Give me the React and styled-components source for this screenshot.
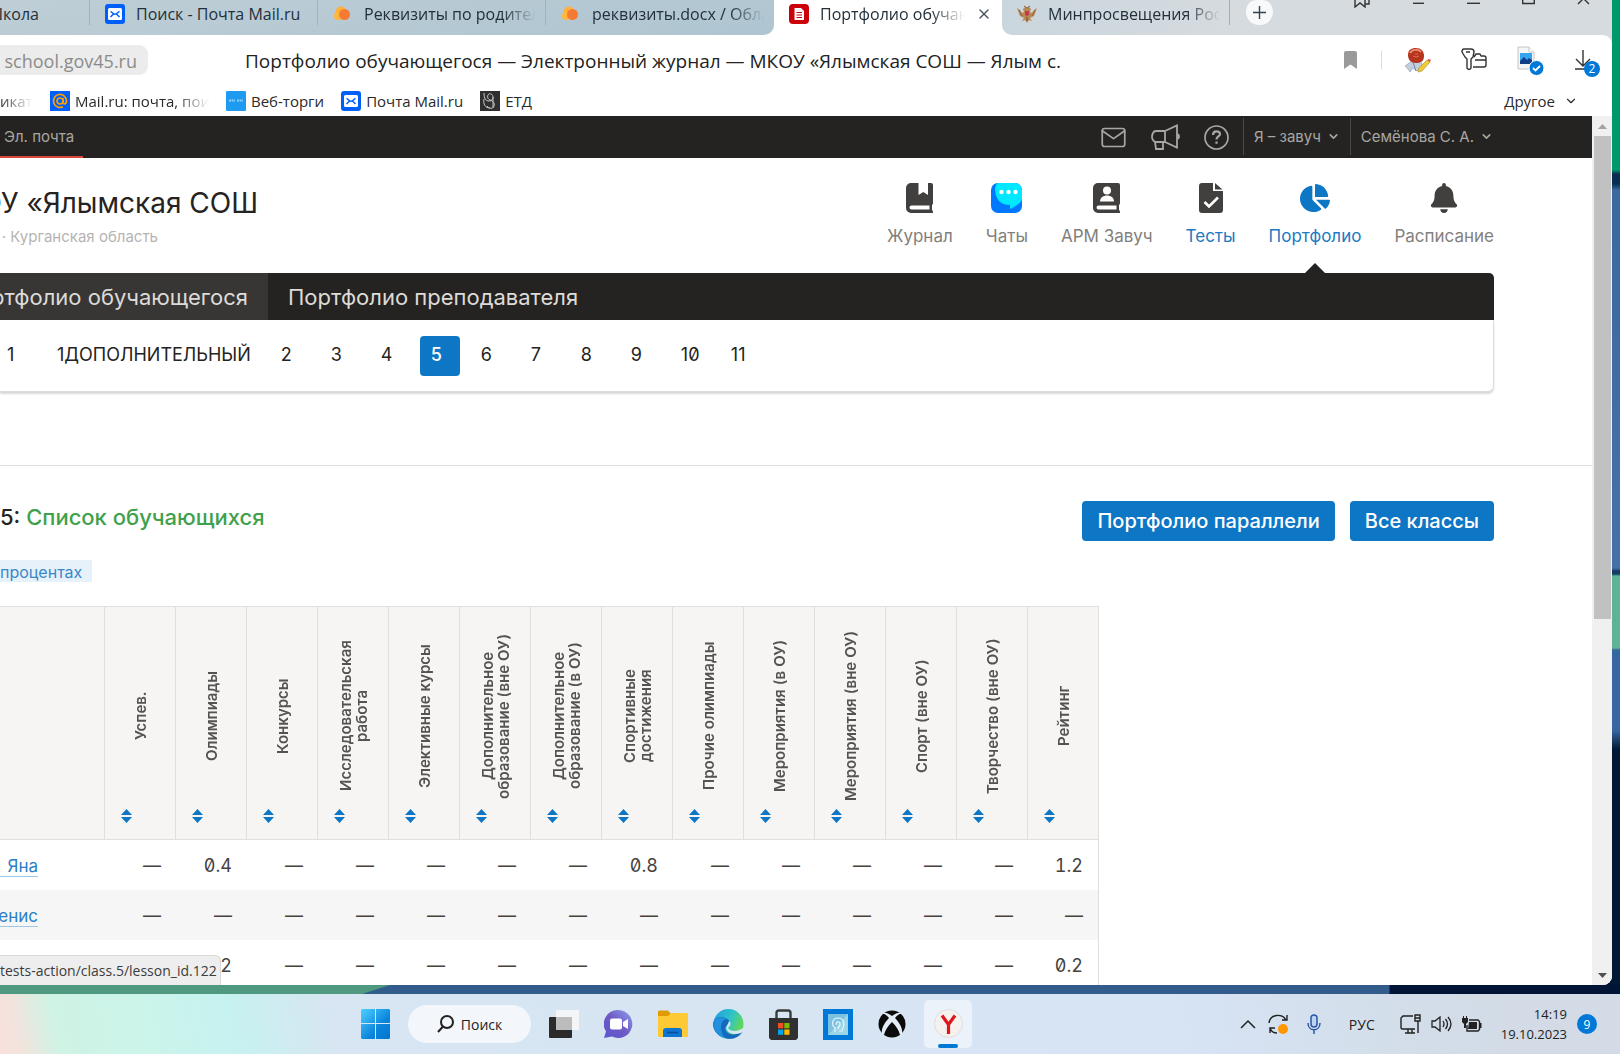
import styled, { createGlobalStyle, css } from "styled-components";
import { FaBell, FaChartPie } from "react-icons/fa";
import { FiChevronDown, FiMail, FiX } from "react-icons/fi";

const GlobalStyle = createGlobalStyle`
	* {
		box-sizing: border-box;
	}
	body {
		margin: 0;
		overflow: hidden;
		font-family: "Inter", "Liberation Sans", sans-serif;
		color: #252321;
	}
	button {
		border: 0;
		padding: 0;
		background: none;
		font: inherit;
		color: inherit;
		cursor: pointer;
	}
	a {
		color: inherit;
		text-decoration: none;
	}
	svg {
		display: block;
		flex: none;
	}
`;

/* ---------- desktop and browser chrome ---------- */

const Desktop = styled.div`
	display: flex;
	flex-direction: column;
	height: 100vh;
	background: linear-gradient(
		180deg,
		#00976a 0 170px,
		#0a2d55 174px 184px,
		#3a689f 190px,
		#4870a8 568px,
		#163a66 571px 574px,
		#5db393 576px 648px,
		#3767a3 650px 730px,
		#001836 750px
	);
`;
const BrowserWindow = styled.div`
	flex: 1;
	min-height: 0;
	margin-right: 8px;
	display: flex;
	flex-direction: column;
	overflow: hidden;
	border-radius: 0 0 9px 0;
	background: #d6dbdf;
	font-family: "Open Sans", "Noto Sans", sans-serif;
`;
const TabStrip = styled.div`
	display: flex;
	flex: none;
	height: 35px;
	background: #fff;
`;
const TabGroup = styled.div`
	display: flex;
	height: 35px;
	${(p) =>
		p.$after
			? css`
					flex: 1;
					border-radius: 0 0 0 10px;
					background: linear-gradient(100deg, #cad6dd, #d6dbdf 40%);
			  `
			: css`
					border-radius: 0 0 10px 0;
					background: linear-gradient(170deg, #bfced6, #aec5d1);
			  `}
`;
const Tab = styled.button`
	display: flex;
	align-items: center;
	gap: 11px;
	width: ${(p) => (p.$short ? 90 : 228)}px;
	height: 35px;
	padding: 0 10px 8px ${(p) => (p.$short ? 0 : 15)}px;
	background: ${(p) => (p.$active ? "#fff" : "none")};
	position: relative;
	&::after {
		content: "";
		display: ${(p) => (p.$line ? "block" : "none")};
		position: absolute;
		right: 0;
		top: 0;
		width: 1px;
		height: 25px;
		background: #9fb2bd;
	}
`;
const Fade = styled.span`
	overflow: hidden;
	white-space: nowrap;
	text-align: left;
	width: ${(p) => (p.$width ? p.$width + "px" : "auto")};
	flex: ${(p) => (p.$width ? "none" : 1)};
	mask-image: linear-gradient(to left, transparent, #000 34px);
`;
const TabText = styled(Fade)`
	font-size: 16px;
	line-height: 24px;
	color: #23303a;
	${(p) =>
		p.$whole &&
		css`
			flex: none;
			mask-image: none;
		`}
`;
/* Text that runs out of the left edge of its box */
const Cut = styled.span`
	display: flex;
	justify-content: flex-end;
	width: ${(p) => p.$width}px;
	overflow: hidden;
	white-space: nowrap;
`;
const NewTab = styled.button`
	display: grid;
	place-items: center;
	width: 27px;
	height: 25px;
	margin-left: 16px;
	border-radius: 11px 11px 13px 13px;
	background: #f7f9fa;
`;
const WindowButtons = styled.div`
	display: flex;
	align-items: flex-start;
	gap: 42px;
	margin-left: auto;
	padding-right: 22px;
`;
const Toolbar = styled.div`
	display: flex;
	flex: none;
	align-items: center;
	height: 50px;
	padding-right: 12px;
	border-radius: 0 9px 0 0;
	background: #fff;
`;
const Domain = styled.button`
	width: 148px;
	height: 30px;
	padding: 1px 11px 0 0;
	border-radius: 0 9px 9px 0;
	background: #ececec;
	color: #8b8b8b;
	font-size: 18px;
`;
const PageTitle = styled.div`
	flex: 1;
	margin-left: 97px;
	padding-top: 2px;
	white-space: nowrap;
	font-size: 19px;
	color: #222;
`;
const ToolIcons = styled.div`
	display: flex;
	align-items: center;
	gap: 28px;
`;
const Flag = styled.button`
	padding-right: 24px;
	border-right: 1px solid #dcdcdc;
	margin-right: -6px;
`;
const Bookmarks = styled.div`
	display: flex;
	flex: none;
	align-items: center;
	gap: 17px;
	height: 31px;
	padding-right: 34px;
	background: #fff;
	font-size: 15px;
	color: #2a2a2a;
`;
const Bookmark = styled.a`
	display: flex;
	align-items: center;
	gap: 5px;
	white-space: nowrap;
`;
const Other = styled.button`
	display: flex;
	align-items: center;
	gap: 9px;
	margin-left: auto;
`;

/* ---------- page ---------- */

const Viewport = styled.div`
	flex: 1;
	min-height: 0;
	display: flex;
	position: relative;
	background: #fff;
`;
const Page = styled.div`
	flex: 1;
	min-width: 0;
	overflow: hidden;
	font-family: "Inter", "Liberation Sans", sans-serif;
`;
const Scrollbar = styled.div`
	display: flex;
	flex-direction: column;
	align-items: center;
	width: 20px;
	background: #f0f0f0;
`;
const ScrollArrow = styled.button`
	display: grid;
	place-items: center;
	width: 20px;
	height: 20px;
`;
const ScrollThumb = styled.div`
	width: 17px;
	height: 483px;
	margin-bottom: auto;
	background: #c1c1c1;
`;
const StatusBubble = styled.div`
	position: absolute;
	left: 0;
	bottom: 0;
	padding: 0 3px 0 0;
	border: solid #d8d8d8;
	border-width: 1px 1px 0 0;
	border-radius: 0 6px 0 0;
	background: #eeeeee;
	font-size: 14px;
	line-height: 29px;
	color: #3c3c3c;
`;

const TopBar = styled.div`
	display: flex;
	height: 42px;
	padding-right: 99px;
	background: #252321;
	color: #a9a7a3;
	font-size: 15px;
`;
const MailLink = styled.a`
	padding: 0 9px 0 4px;
	line-height: 41px;
	border-bottom: 2px solid #d9473a;
`;
const TopIcons = styled.div`
	display: flex;
	align-items: center;
	gap: 24px;
	margin-left: auto;
	padding-right: 14px;
`;
const TopMenu = styled.button`
	display: flex;
	align-items: center;
	gap: 6px;
	margin: 2px 0 3px;
	padding: 0 ${(p) => (p.$last ? 0 : 10)}px 0 10px;
	border-left: 1px solid #4a4845;
`;

const Inner = styled.div`
	margin-right: 98px;
`;
const SiteHeader = styled.header`
	display: flex;
	justify-content: space-between;
	height: 115px;
`;
const School = styled.div`
	padding-top: 27px;
`;
const SchoolName = styled.h1`
	margin: 0 0 8px;
	font-size: 28px;
	line-height: 36px;
	font-weight: 400;
`;
const Region = styled.div`
	font-size: 15px;
	line-height: 16px;
	color: #b5b4b2;
`;
const Apps = styled.nav`
	display: flex;
	gap: 33px;
`;
const AppLink = styled.a`
	position: relative;
	display: flex;
	flex-direction: column;
	align-items: center;
	gap: 12px;
	padding-top: 25px;
	font-size: 17px;
	line-height: 22px;
	color: ${(p) => (p.$blue ? "#2079c3" : "#82807c")};
	&::after {
		content: "";
		display: ${(p) => (p.$current ? "block" : "none")};
		position: absolute;
		bottom: 0;
		border: 10px solid transparent;
		border-top: 0;
		border-bottom-color: #252321;
	}
`;
const Sections = styled.nav`
	display: flex;
	height: 47px;
	border-radius: 0 5px 0 0;
	overflow: hidden;
	background: #252321;
	color: #dddbd8;
	font-size: 22px;
	line-height: 48px;
`;
const Section = styled.a`
	padding: 0 20px;
	${(p) =>
		p.$current &&
		css`
			padding-left: 0;
			background: #383634;
		`}
`;
const Grades = styled.nav`
	display: flex;
	gap: 10px;
	height: 72px;
	margin-bottom: 73px;
	padding: 16px 0;
	border: solid #dcdcdc;
	border-width: 0 1px 1px 0;
	border-radius: 0 0 6px 0;
	box-shadow: 0 2px 2px #d9d9d9;
	font-size: 18px;
	line-height: 38px;
	font-feature-settings: "zero";
`;
const Grade = styled.a`
	min-width: 40px;
	height: 40px;
	padding: 0 9px 0 11px;
	border-radius: 4px;
	${(p) =>
		p.$first &&
		css`
			min-width: 36px;
			padding-left: 7px;
		`}
	${(p) =>
		p.$current &&
		css`
			background: #0d76c5;
			color: #fff;
			font-weight: 500;
		`}
`;
const Content = styled.main`
	padding-top: 35px;
	border-top: 1px solid #e0e0e0;
`;
const ListHead = styled(Inner)`
	display: flex;
	justify-content: space-between;
	align-items: flex-start;
	h2 {
		margin: 0;
		font-size: 22px;
		line-height: 32px;
		font-weight: 500;
	}
	em {
		font-style: normal;
		color: #3fa14c;
	}
`;
const Buttons = styled.div`
	display: flex;
	gap: 15px;
`;
const Button = styled.button`
	height: 40px;
	padding: 0 15px;
	border-radius: 4px;
	background: #0d76c5;
	color: #fff;
	font-size: 20px;
	font-weight: 500;
`;
const Percent = styled.button`
	display: block;
	height: 22px;
	margin: 19px 0 24px;
	padding: 1px 10px 0 0;
	background: #e6f1fa;
	color: #3a87c8;
	font-size: 16px;
`;

const Table = styled.table`
	table-layout: fixed;
	width: 1099px;
	border-collapse: separate;
	border-spacing: 0;
	border-top: 1px solid #e0dfdd;
	font-size: 18px;
	font-feature-settings: "tnum", "zero";
	col {
		width: 71px;
	}
	col:first-child {
		width: 105px;
	}
	th {
		padding: 0;
		border: solid #e0dfdd;
		border-width: 0 1px 1px 0;
		background: #f6f5f3;
	}
	td {
		height: 50px;
		padding: 1px 15px 0 0;
		text-align: right;
		color: #45423f;
	}
	td:first-child {
		padding: 0;
	}
	td:last-child {
		border-right: 1px solid #e0dfdd;
	}
	tbody tr:nth-child(even) td {
		background: #f6f6f6;
	}
`;
const HeadCell = styled.div`
	display: flex;
	flex-direction: column;
	align-items: center;
	gap: 7px;
	height: 232px;
	padding: 23px 14px 16px 16px;
`;
const HeadLabel = styled.span`
	height: 172px;
	writing-mode: vertical-rl;
	rotate: 180deg;
	text-align: center;
	font-size: 15px;
	line-height: 16px;
	font-weight: 600;
	color: #55524f;
`;
const Sort = styled.button`
	align-self: flex-start;
`;
const Student = styled.a`
	flex: none;
	min-width: 38px;
	padding-top: 3px;
	text-align: right;
	font-size: 17px;
	line-height: 20px;
	border-bottom: 1px solid #9ec7e8;
	color: #2b7fc6;
`;

/* ---------- taskbar ---------- */

const Taskbar = styled.footer`
	flex: none;
	display: flex;
	align-items: center;
	height: 60px;
	padding: 0 23px 0 361px;
	background: linear-gradient(
		78deg,
		#f9e0dd 0,
		#f3e3dd 20px,
		#cff3e4 60px,
		#cbf4ea 150px,
		#c6f2f0 230px,
		#d7e6f2 330px,
		#d7e4f4 1150px,
		#d2dbe6 1480px,
		#d2dbe6
	);
	font-family: "Open Sans", "Noto Sans", sans-serif;
	color: #222;
`;
/* The band of wallpaper between the window and the taskbar */
const Wallpaper = styled.div`
	flex: none;
	height: 9px;
	background: linear-gradient(90deg, #325c8b 1389px, #001535 1390px);
	&::before {
		content: "";
		display: block;
		width: 390px;
		height: 9px;
		background: #4f9981;
		clip-path: polygon(0 0, 100% 0, calc(100% - 28px) 100%, 0 100%);
	}
`;
const Pinned = styled.div`
	display: flex;
	align-items: center;
	gap: 25px;
	margin-left: 18px;
`;
const Search = styled.button`
	display: flex;
	align-items: center;
	justify-content: center;
	gap: 7px;
	width: 123px;
	height: 38px;
	margin-left: 18px;
	border-radius: 19px;
	background: #f3f7fc;
	font-size: 14px;
`;
const Running = styled.button`
	display: flex;
	flex-direction: column;
	align-items: center;
	justify-content: flex-end;
	gap: 6px;
	width: 48px;
	height: 48px;
	margin-left: -7px;
	border-radius: 5px;
	background: #ebf2fa;
	&::after {
		content: "";
		width: 20px;
		height: 4px;
		border-radius: 2px;
		background: #0078d4;
	}
`;
const Tray = styled.div`
	display: flex;
	align-items: center;
	margin-left: auto;
	font-size: 14px;
`;
const TrayGroup = styled.div`
	display: flex;
	align-items: center;
	gap: ${(p) => p.$gap}px;
	margin-right: ${(p) => p.$after}px;
`;
const Clock = styled.div`
	text-align: right;
	font-size: 13px;
	line-height: 20px;
`;
const Count = styled.span`
	display: grid;
	place-items: center;
	width: 20px;
	height: 20px;
	margin-left: 10px;
	border-radius: 50%;
	background: #0078d7;
	color: #fff;
	font-size: 12px;
`;

/* ---------- icons ---------- */

const MailRu = () => (
	<svg width="20" height="20" viewBox="0 0 20 20">
		<rect width="20" height="20" rx="3" fill="#005ff9" />
		<rect x="3" y="4" width="14" height="12" rx="1.5" fill="#fff" />
		<path d="M5.5 7.5c1.5.2 2.5 2.8 4.5 2.8s3-2.6 4.5-2.8M5.5 13l3-3M14.5 13l-3-3" fill="none" stroke="#005ff9" strokeWidth="1.5" />
	</svg>
);
const Cloud = () => (
	<svg width="20" height="20" viewBox="0 0 20 20">
		<circle cx="8" cy="8" r="5.5" fill="#ffb13c" />
		<circle cx="5" cy="12" r="4" fill="#ffb83d" />
		<circle cx="11.5" cy="10.500" r="5.5" fill="#f57a33" />
	</svg>
);
const Journal = () => (
	<svg width="20" height="20" viewBox="0 0 20 20">
		<rect width="20" height="20" rx="4" fill="#cc0008" />
		<path d="M5.5 4h6.5l3 3v9H5.5z" fill="#fff" />
		<path d="M7.5 8.5h5.5M7.5 11h5.5M7.5 13.5h5.5" stroke="#cc0008" strokeWidth="1.2" />
	</svg>
);
const Eagle = () => (
	<svg width="20" height="20" viewBox="0 0 20 20">
		<path d="M0 4l3 8 4 2-2 3 3-1 2 3 2-3 3 1-2-3 4-2 3-8-3 2-2 3-2-1 1-3-2-2-2 1-2-1-2 2 1 3-2 1-2-3z" fill="#b98a55" />
		<path d="M2 6l3 6M18 6l-3 6M7 2l3 2 3-2" stroke="#8a6238" fill="none" />
		<path d="M8 7h4v3.5l-2 2-2-2z" fill="#c43b4a" />
		<path d="M10 13v4" stroke="#6e4c2c" />
	</svg>
);
const AtMail = () => (
	<svg width="20" height="20" viewBox="0 0 20 20">
		<rect width="20" height="20" fill="#005ff9" />
		<circle cx="10" cy="10" r="3" fill="none" stroke="#ff9e00" strokeWidth="1.7" />
		<path d="M13 7v4.5c0 2 3.5 2 3.5-1.5A6.5 6.5 0 1 0 13 15.7" fill="none" stroke="#ff9e00" strokeWidth="1.7" />
	</svg>
);
const Torgi = () => (
	<svg width="20" height="20" viewBox="0 0 20 20">
		<rect width="20" height="20" rx="1" fill="#1e9bf0" />
		<path d="M3 9.5h6M11 9.5h6" stroke="#8fd0fb" strokeWidth="2" strokeDasharray="2 .6" />
	</svg>
);
const Etd = () => (
	<svg width="20" height="20" viewBox="0 0 20 20">
		<rect width="20" height="20" fill="#2f2f2f" />
		<path d="M4 2c0 6 2 8 5 8s4-2 4-4-2-4-4-3-2 5 1 6 5 3 4 6-5 3-7 0M13 6v11M4 8c-1 5 1 9 6 9" fill="none" stroke="#c9c9c9" />
	</svg>
);
const FlagIcon = () => (
	<svg width="13" height="18" viewBox="0 0 13 18">
		<path d="M2 0h9a2 2 0 0 1 2 2v16l-6.5-4.5L0 18V2a2 2 0 0 1 2-2z" fill="#9a9a9a" />
	</svg>
);
const Hero = () => (
	<svg width="28" height="28" viewBox="0 0 28 28">
		<path d="M1 20l7-5 10 2-1 5-4 3-4-3-3 4-2-3z" fill="#c3cedd" stroke="#8997aa" strokeWidth=".6" />
		<path d="M9 16l3 9" stroke="#7486a0" />
		<path d="M4 9c0-5 3-7 8-7s8 3 8 8-3 7-8 7-8-3-8-8z" fill="#b5351f" />
		<path d="M6 7c2-4 9-4 11-1" stroke="#ea8d73" strokeWidth="2" fill="none" />
		<path d="M9 10l3 1 3-1M11 8h3" stroke="#e06b50" fill="none" />
		<path d="M14 26l1-4 8-8 3 2-8 9z" fill="#f0cb34" stroke="#a38a1f" strokeWidth=".6" />
		<path d="M23 14l2-1 2 1-1 2z" fill="#e2574c" />
	</svg>
);
const Keys = () => (
	<svg width="28" height="28" viewBox="0 0 28 28" fill="none" stroke="#333" strokeWidth="1.4" strokeLinejoin="round">
		<path d="M4 3h7q3 0 3 3l-1 5-2 2v9q-2 3-4 0v-9l-2-2-3-5q0-3 2-3z" />
		<path d="M6 6h4M14 11l2-3h4l1 2h3q2 0 2 2v7q0 2-2 2h-11M15 14h11" />
	</svg>
);
const DocBadge = () => (
	<svg width="28" height="32" viewBox="0 0 28 32">
		<path d="M2 3h11l5 5v17H2z" fill="#f5f5f5" stroke="#c6c6c6" />
		<path d="M13 3v5h5" fill="#fff" stroke="#c6c6c6" />
		<rect x="4" y="9" width="12" height="11" fill="#34a5ee" />
		<path d="M4 20v-3l4-4 3 3 2-2 3 2v4z" fill="#123f86" />
		<circle cx="20.5" cy="24" r="7.500" fill="#0078d7" stroke="#fff" />
		<path d="M17 24l2.5 2.5 4.5-4.5" fill="none" stroke="#fff" strokeWidth="1.8" />
	</svg>
);
const Downloads = styled.button`
	position: relative;
	span {
		position: absolute;
		right: 0;
		bottom: -3px;
		width: 16px;
		height: 16px;
		border-radius: 50%;
		background: #0078d7;
		color: #fff;
		font-size: 12px;
		line-height: 16px;
	}
`;
const DownloadIcon = () => (
	<svg width="28" height="28" viewBox="0 0 28 28" fill="none" stroke="#333" strokeWidth="1.4">
		<path d="M11 4v16M4 13l7 7 7-7M3 23h12" />
	</svg>
);
const Megaphone = () => (
	<svg width="29" height="26" viewBox="0 0 29 26" fill="none" stroke="#a9a7a3" strokeWidth="1.8">
		<path d="M14 7H5q-2 0-3 2-2 4 0 7 1 2 3 2h9zM14 7l12-5.500v22L14 18M4 18l1 7h7v-7M27 10q2 2.500 0 5" />
	</svg>
);
const Help = () => (
	<svg width="25" height="25" viewBox="0 0 25 25" fill="none" stroke="#a9a7a3">
		<circle cx="12.5" cy="12.5" r="11.5" strokeWidth="1.7" />
		<path d="M9 10c0-5 7-4.5 7-1 0 2.5-3.5 2.5-3.5 5.5M12.5 16.5v2.2" strokeWidth="2.2" />
	</svg>
);
const BookBase = ({ children }) => (
	<svg width="27" height="30" viewBox="0 0 27 30">
		<path
			d="M5 0h20a2 2 0 0 1 2 2v18q0 1.5-1 2v5q1 .5 1 2v1H5a5 5 0 0 1-5-5V5a5 5 0 0 1 5-5zM5.5 22.5a2 2 0 0 0 0 4H23.5v-4z"
			fill="#42403e"
			fillRule="evenodd"
		/>
		{children}
	</svg>
);
const BookIcon = () => (
	<BookBase>
		<path d="M12.5 0h9.500v12l-4.700-3-4.800 3z" fill="#fff" />
	</BookBase>
);
const PersonBookIcon = () => (
	<BookBase>
		<circle cx="14" cy="7.5" r="4" fill="#fff" />
		<path d="M7 18.5c0-8 14-8 14 0z" fill="#fff" />
	</BookBase>
);
const ChatIcon = () => (
	<svg width="31" height="30" viewBox="0 0 31 30">
		<rect width="31" height="30" rx="7" fill="#0077ff" />
		<path d="M7 0h17a7 7 0 0 1 7 7v10q-3 5-12 9v-4C9 22 5 16 4 7c0-4 1-6 3-7z" fill="#00e8ff" />
		<g fill="#fff">
			<circle cx="10.5" cy="9" r="2.2" />
			<circle cx="17.5" cy="9" r="2.2" />
			<circle cx="24.5" cy="9" r="2.2" />
		</g>
	</svg>
);
const TestIcon = () => (
	<svg width="24" height="30" viewBox="0 0 24 30">
		<path d="M3 0h11v8h10v19a3 3 0 0 1-3 3H3a3 3 0 0 1-3-3V3a3 3 0 0 1 3-3z" fill="#42403e" />
		<path d="M16 0l7.5 6.5H16z" fill="#42403e" />
		<path d="M5.5 19l4.5 4.5 9-9" fill="none" stroke="#fff" strokeWidth="2.6" />
	</svg>
);
const SortIcon = () => (
	<svg width="11" height="14" viewBox="0 0 11 14">
		<path d="M5.5 0L11 6H0zM5.5 14L11 8H0z" fill="#0d76c5" />
	</svg>
);
const WindowsIcon = () => (
	<svg width="29" height="30" viewBox="0 0 29 30">
		<defs>
			<linearGradient id="win" x1="0" y1="0" x2="1" y2="1">
				<stop offset="0" stopColor="#4fd0ff" />
				<stop offset=".6" stopColor="#0c86dd" />
				<stop offset="1" stopColor="#0074d0" />
			</linearGradient>
		</defs>
		<path d="M1 0h13v14H0V1zM15 0h13l1 1v13H15zM0 15h14v15H1l-1-1zM15 15h14v14l-1 1H15z" fill="url(#win)" />
	</svg>
);
const SearchIcon = () => (
	<svg width="17" height="18" viewBox="0 0 17 18" fill="none" stroke="#222" strokeWidth="2">
		<circle cx="10" cy="7" r="6" />
		<path d="M6 11.5L1 17" />
	</svg>
);
const TaskView = () => (
	<svg width="30" height="30" viewBox="0 0 30 30">
		<rect y="8" width="23" height="21" rx="1" fill="#2b2b2b" />
		<rect x="7" y="1" width="23" height="20" rx="1" fill="#f4f5f6" />
		<rect x="7" y="8" width="16" height="13" fill="#bcbcbc" />
	</svg>
);
const TeamsChat = () => (
	<svg width="29" height="30" viewBox="0 0 29 30">
		<defs>
			<linearGradient id="chat" x1="1" y1="0" x2="0" y2="1">
				<stop offset="0" stopColor="#8fa0f0" />
				<stop offset=".5" stopColor="#6f5bc4" />
				<stop offset="1" stopColor="#5a55d0" />
			</linearGradient>
		</defs>
		<path d="M14.5 1A14 14 0 1 1 8 27.5L0 29l2-6.5A14 14 0 0 1 14.5 1z" fill="url(#chat)" />
		<rect x="6" y="9.5" width="12" height="11" rx="2" fill="#fff" />
		<path d="M19 13l5-3v10l-5-3z" fill="#fff" />
	</svg>
);
const Explorer = () => (
	<svg width="30" height="28" viewBox="0 0 30 28">
		<path d="M0 2a1.5 1.5 0 0 1 1.5-1.5H10L13 4v5H0z" fill="#e09b00" />
		<path d="M0 6h10l3-3h16l1 1v22l-1 1H1l-1-1z" fill="#fdc935" />
		<path d="M5 27v-6a3 3 0 0 1 3-3h13a3 3 0 0 1 3 3v6z" fill="#0d74cf" />
		<path d="M9 22.5h11" stroke="#064f98" strokeWidth="1.5" />
	</svg>
);
const Edge = () => (
	<svg width="31" height="30" viewBox="0 0 31 30">
		<defs>
			<linearGradient id="edgeTop" x1="0" y1="0" x2="1" y2=".4">
				<stop offset="0" stopColor="#1d9be0" />
				<stop offset=".6" stopColor="#2fc3c9" />
				<stop offset="1" stopColor="#62d85a" />
			</linearGradient>
		</defs>
		<circle cx="15.5" cy="15" r="15" fill="url(#edgeTop)" />
		<path d="M0 15C1 8 7 7 12 9c6 2 5 5 4 8-2-2-5 1-3 5 3 5 11 4 17 0-5 9-15 9-20 6C4 26 0 21 0 15z" fill="#1468bd" />
		<path d="M1 12c3-5 9-4 12-2-6 2-7 12-1 19C4 27-1 20 1 12z" fill="#2390dd" />
		<path d="M16 12c3 2 1 5-1 7 2 4 10 4 15 0l1 3-3 2c-6 2-12 1-14-3-2-3 1-5 2-9z" fill="#d9e6f4" />
	</svg>
);
const Store = () => (
	<svg width="29" height="31" viewBox="0 0 29 31">
		<path d="M7.5 10V4q0-2.5 2.5-2.5h9q2.5 0 2.5 2.5v6" fill="none" stroke="#3a3a3a" strokeWidth="2.4" />
		<path d="M0 9h29v20l-2 2H2l-2-2z" fill="#303030" />
		<path d="M9 14h5.3v5.3H9z" fill="#f25022" />
		<path d="M15.3 14h5.2v5.3h-5.2z" fill="#7fba00" />
		<path d="M9 20.5h5.3v5.3H9z" fill="#00a4ef" />
		<path d="M15.3 20.5h5.2v5.3h-5.2z" fill="#ffb900" />
	</svg>
);
const HeadIcon = () => (
	<svg width="30" height="31" viewBox="0 0 30 31">
		<rect width="30" height="31" fill="#0078d7" />
		<rect x="5" y="5" width="20" height="21" fill="#7cc0e2" />
		<path d="M5 26L25 5v21z" fill="#9cd6e6" />
		<path d="M12 23v-4c-4-3-3-10 3-10s7 6 5 10l-1 3h-3M13 16c0-4 4-4 4-1s-2 2-2 5" fill="none" stroke="#e4f6fc" strokeWidth="1.2" />
	</svg>
);
const Xbox = () => (
	<svg width="28" height="28" viewBox="0 0 28 28">
		<circle cx="14" cy="14" r="13.5" fill="#0b0b0b" />
		<path
			d="M5 3c3-1 6 1 9 3 3-2 6-4 9-3l1 1c-3-1-5 2-7 4 5 5 8 11 7 16l-2 1c-1-5-4-9-8-13-4 4-7 8-8 13l-2-1c-1-5 2-11 7-16-2-2-4-5-7-4z"
			fill="#e3ecf6"
		/>
	</svg>
);
const Yandex = () => (
	<svg width="29" height="29" viewBox="0 0 29 29">
		<circle cx="14.5" cy="14.5" r="14" fill="#f4f1ee" stroke="#dcdde0" />
		<path d="M8 6.5l6.5 9 6.5-9M14.5 15v10" fill="none" stroke="#e0161c" strokeWidth="3.2" />
	</svg>
);
const Sync = () => (
	<svg width="21" height="21" viewBox="0 0 21 21" fill="none" stroke="#222" strokeWidth="1.4">
		<path d="M1 9C2 0 14-1 18 6M19 1v5h-5M2 19v-5h5M2 14c1 3 4 5 7 5" />
		<circle cx="15" cy="15" r="5" fill="#ff9800" stroke="none" />
	</svg>
);
const Mic = () => (
	<svg width="14" height="20" viewBox="0 0 14 20" fill="none" stroke="#2b57a7" strokeWidth="1.5">
		<rect x="4" y="1" width="6" height="12" rx="3" fill="#bcd3f2" />
		<path d="M1 9c0 9 12 9 12 0M7 16v4" />
	</svg>
);
const Network = () => (
	<svg width="21" height="20" viewBox="0 0 21 20" fill="none" stroke="#222" strokeWidth="1.4">
		<path d="M13 2H3L1 4v10l1 1h13M8 15v4M12 15v4M5 19h10" />
		<path d="M15 1h5v6h-5zM15 4h5M18 7v12" />
	</svg>
);
const Speaker = () => (
	<svg width="21" height="18" viewBox="0 0 21 18" fill="none" stroke="#222" strokeWidth="1.3">
		<path d="M1 6h3l5-4v14l-5-4H1zM12 6q2 3 0 6M14.5 4q4 5 0 10M17 2q6 7 0 14" />
	</svg>
);
const Battery = () => (
	<svg width="20" height="16" viewBox="0 0 20 16">
		<path d="M7 4h9l1.5 1.5v8L16 15H5V9" fill="none" stroke="#222" strokeWidth="1.4" />
		<path d="M7 6h8v7H6zM18 7h1.5v5H18zM0 2h6v4L4 8v4H2V8L0 6zM1 0h1v2H1zM4 0h1v2H4z" fill="#222" />
	</svg>
);

/* ---------- data ---------- */

const apps = [
	{ name: "Журнал", icon: <BookIcon /> },
	{ name: "Чаты", icon: <ChatIcon /> },
	{ name: "АРМ Завуч", icon: <PersonBookIcon /> },
	{ name: "Тесты", icon: <TestIcon />, blue: true },
	{ name: "Портфолио", icon: <FaChartPie size={30} color="#0d76c5" />, blue: true, current: true },
	{ name: "Расписание", icon: <FaBell size={30} color="#42403e" /> },
];
const grades = ["1", "1ДОПОЛНИТЕЛЬНЫЙ", "2", "3", "4", "5", "6", "7", "8", "9", "10", "11"];
const columns = [
	"Успев.",
	"Олимпиады",
	"Конкурсы",
	"Исследовательская работа",
	"Элективные курсы",
	"Дополнительное образование (вне ОУ)",
	"Дополнительное образование (в ОУ)",
	"Спортивные достижения",
	"Прочие олимпиады",
	"Мероприятия (в ОУ)",
	"Мероприятия (вне ОУ)",
	"Спорт (вне ОУ)",
	"Творчество (вне ОУ)",
	"Рейтинг",
];
const students = [
	{ name: "Яна", scores: { 1: "0.4", 7: "0.8", 13: "1.2" } },
	{ name: "Денис", scores: {} },
	{ name: "", scores: { 1: "0.2", 13: "0.2" } },
];

const Chrome = () => (
	<>
		<TabStrip>
			<TabGroup>
				<Tab $short $line>
					<Cut $width={39}>
						<TabText $whole>Школа</TabText>
					</Cut>
				</Tab>
				<Tab $line>
					<MailRu />
					<TabText $whole>Поиск - Почта Mail.ru</TabText>
				</Tab>
				<Tab $line>
					<Cloud />
					<TabText>Реквизиты по родительской</TabText>
				</Tab>
				<Tab>
					<Cloud />
					<TabText>реквизиты.docx / Облако</TabText>
				</Tab>
			</TabGroup>
			<Tab $active>
				<Journal />
				<TabText>Портфолио обучающегося</TabText>
				<FiX size={16} color="#4a5560" />
			</Tab>
			<TabGroup $after>
				<Tab $line>
					<Eagle />
					<TabText>Минпросвещения России</TabText>
				</Tab>
				<NewTab aria-label="Новая вкладка">
					<svg width="13" height="13" viewBox="0 0 13 13">
						<path d="M6.5 0v13M0 6.5h13" stroke="#33424d" strokeWidth="1.4" />
					</svg>
				</NewTab>
				<WindowButtons>
					<svg width="16" height="8" viewBox="0 0 16 8" fill="none" stroke="#333" strokeWidth="1.4">
						<path d="M1 0v7l5-4 5 4V0M11 4h4V0" />
					</svg>
					{["M1 3.3h11", "M0 3.3h13", "M.7 0v3.5h11.6V0", "M1 4l5.5-5.5L12 4"].map((d) => (
						<svg key={d} width="13" height="5" viewBox="0 0 13 5" fill="none" stroke="#333" strokeWidth="1.4">
							<path d={d} />
						</svg>
					))}
				</WindowButtons>
			</TabGroup>
		</TabStrip>
		<Toolbar>
			<Domain>
				<Cut $width={137}>school.gov45.ru</Cut>
			</Domain>
			<PageTitle>Портфолио обучающегося — Электронный журнал — МКОУ «Ялымская СОШ — Ялым с.</PageTitle>
			<ToolIcons>
				<Flag aria-label="Закладка">
					<FlagIcon />
				</Flag>
				<Hero />
				<Keys />
				<DocBadge />
				<Downloads>
					<DownloadIcon />
					<span>2</span>
				</Downloads>
			</ToolIcons>
		</Toolbar>
		<Bookmarks>
			<Fade $width={33}>икатор</Fade>
			<Bookmark href="#">
				<AtMail />
				<Fade $width={134}>Mail.ru: почта, поиск</Fade>
			</Bookmark>
			<Bookmark href="#">
				<Torgi />
				Веб-торги
			</Bookmark>
			<Bookmark href="#">
				<MailRu />
				Почта Mail.ru
			</Bookmark>
			<Bookmark href="#">
				<Etd />
				ЕТД
			</Bookmark>
			<Other>
				Другое
				<FiChevronDown size={14} />
			</Other>
		</Bookmarks>
	</>
);

const Portfolio = () => (
	<Page>
		<TopBar>
			<MailLink href="#">Эл. почта</MailLink>
			<TopIcons>
				<FiMail size={27} strokeWidth={1.5} />
				<Megaphone />
				<Help />
			</TopIcons>
			<TopMenu>
				Я – завуч
				<FiChevronDown size={13} strokeWidth={3} />
			</TopMenu>
			<TopMenu $last>
				Семёнова С. А.
				<FiChevronDown size={13} strokeWidth={3} />
			</TopMenu>
		</TopBar>
		<Inner>
			<SiteHeader>
				<School>
					<SchoolName>
						<Cut $width={258}>МКОУ «Ялымская СОШ</Cut>
					</SchoolName>
					<Region>
						<Cut $width={158}>· Курганская область</Cut>
					</Region>
				</School>
				<Apps>
					{apps.map((app) => (
						<AppLink key={app.name} href="#" $blue={app.blue} $current={app.current}>
							{app.icon}
							{app.name}
						</AppLink>
					))}
				</Apps>
			</SiteHeader>
			<Sections>
				<Section href="#" $current>
					<Cut $width={248}>Портфолио обучающегося</Cut>
				</Section>
				<Section href="#">Портфолио преподавателя</Section>
			</Sections>
			<Grades>
				{grades.map((grade, index) => (
					<Grade key={grade} href="#" $first={index === 0} $current={grade === "5"}>
						{grade}
					</Grade>
				))}
			</Grades>
		</Inner>
		<Content>
			<ListHead>
				<h2>
					5: <em>Список обучающихся</em>
				</h2>
				<Buttons>
					<Button>Портфолио параллели</Button>
					<Button>Все классы</Button>
				</Buttons>
			</ListHead>
			<Percent>процентах</Percent>
			<Table>
				<colgroup>
					<col />
					{columns.map((column) => (
						<col key={column} />
					))}
				</colgroup>
				<thead>
					<tr>
						<th aria-label="Обучающийся" />
						{columns.map((column) => (
							<th key={column} scope="col">
								<HeadCell>
									<HeadLabel>{column}</HeadLabel>
									<Sort aria-label="Сортировать">
										<SortIcon />
									</Sort>
								</HeadCell>
							</th>
						))}
					</tr>
				</thead>
				<tbody>
					{students.map((student, row) => (
						<tr key={row}>
							<td>
								{student.name && (
									<Cut $width={38}>
										<Student href="#">{student.name}</Student>
									</Cut>
								)}
							</td>
							{columns.map((column, index) => (
								<td key={column}>{student.scores[index] || "—"}</td>
							))}
						</tr>
					))}
				</tbody>
			</Table>
		</Content>
	</Page>
);

export default function App() {
	return (
		<Desktop>
			<GlobalStyle />
			<BrowserWindow>
				<Chrome />
				<Viewport>
					<Portfolio />
					<Scrollbar>
						<ScrollArrow aria-label="Вверх">
							<svg width="9" height="5" viewBox="0 0 9 5">
								<path d="M4.5 0L9 5H0z" fill="#a3a3a3" />
							</svg>
						</ScrollArrow>
						<ScrollThumb />
						<ScrollArrow aria-label="Вниз">
							<svg width="9" height="5" viewBox="0 0 9 5">
								<path d="M4.5 5L9 0H0z" fill="#505050" />
							</svg>
						</ScrollArrow>
					</Scrollbar>
					<StatusBubble>tests-action/class.5/lesson_id.122</StatusBubble>
				</Viewport>
			</BrowserWindow>
			<Wallpaper />
			<Taskbar>
				<WindowsIcon />
				<Search>
					<SearchIcon />
					Поиск
				</Search>
				<Pinned>
					<TaskView />
					<TeamsChat />
					<Explorer />
					<Edge />
					<Store />
					<HeadIcon />
					<Xbox />
					<Running aria-label="Браузер">
						<Yandex />
					</Running>
				</Pinned>
				<Tray>
					<TrayGroup $gap={12} $after={18}>
						<svg width="16" height="10" viewBox="0 0 16 10">
							<path d="M1 9l7-7 7 7" fill="none" stroke="#222" strokeWidth="1.5" />
						</svg>
						<Sync />
					</TrayGroup>
					<TrayGroup $gap={28} $after={25}>
						<Mic />
						РУС
					</TrayGroup>
					<TrayGroup $gap={10} $after={19}>
						<Network />
						<Speaker />
						<Battery />
					</TrayGroup>
					<Clock>
						14:19
						<br />
						19.10.2023
					</Clock>
					<Count>9</Count>
				</Tray>
			</Taskbar>
		</Desktop>
	);
}
